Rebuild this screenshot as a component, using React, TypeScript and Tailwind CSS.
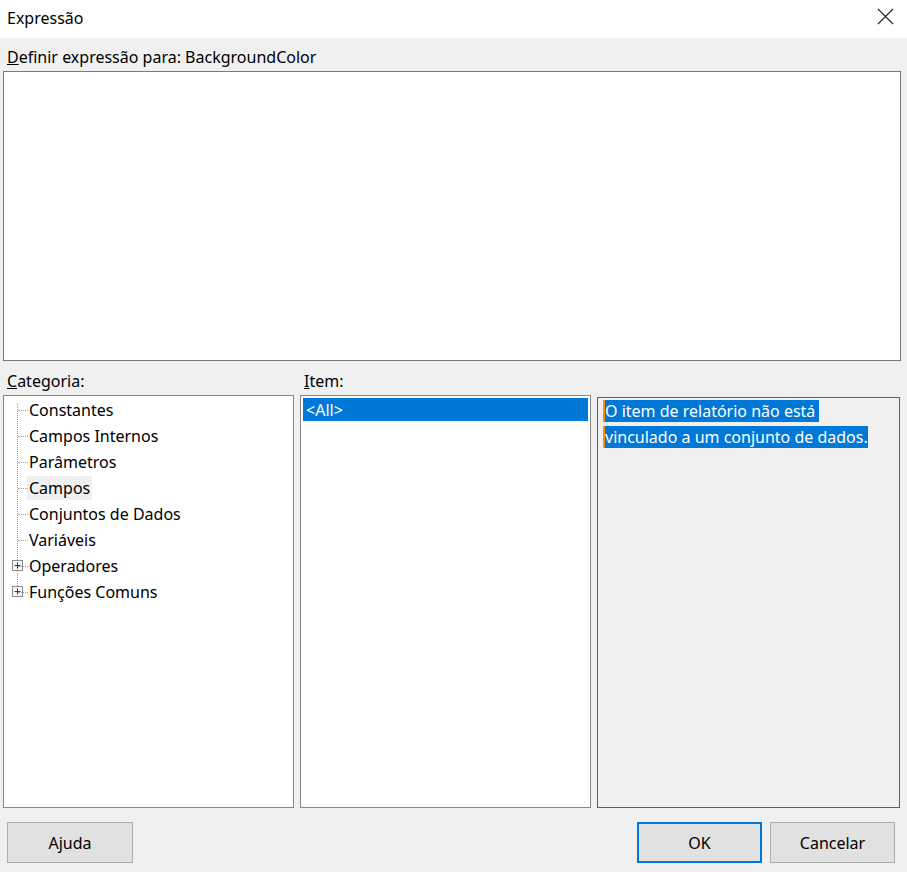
import React from "react";

const font = { fontFamily: '"Segoe UI", "Noto Sans", "Liberation Sans", sans-serif' };

function PlusBox() {
  return (
    <svg width="11" height="11" viewBox="0 0 11 11" className="shrink-0">
      <rect x="0.5" y="0.5" width="10" height="10" fill="#f7f7f7" stroke="#8c8c8c" />
      <path d="M2.5 5.5h6M5.5 2.5v6" stroke="#1c3f8a" strokeWidth="1" />
    </svg>
  );
}

const cats = [
  { label: "Constantes" },
  { label: "Campos Internos" },
  { label: "Parâmetros" },
  { label: "Campos", hover: true },
  { label: "Conjuntos de Dados" },
  { label: "Variáveis" },
  { label: "Operadores", plus: true },
  { label: "Funções Comuns", plus: true },
];

export default function App() {
  return (
    <div className="w-[907px] h-[872px] bg-[#f0f0f0] flex flex-col text-[16px] text-black" style={font}>
      {/* title bar */}
      <div className="h-[38px] bg-white flex items-center justify-between pl-[7px] pr-[13px] shrink-0">
        <span className="mt-[-2px]">Expressão</span>
        <svg width="17" height="17" viewBox="0 0 17 17" className="mt-[-6px]">
          <path d="M1 1L16 16M16 1L1 16" stroke="#222" strokeWidth="1.1" />
        </svg>
      </div>

      <div className="flex flex-col px-[3px] pr-[6px] flex-1">
        <div className="h-[33px] flex items-center pl-[4px] pt-[4px]">
          <span><u>D</u>efinir expressão para: BackgroundColor</span>
        </div>
        <div className="h-[290px] bg-white border border-[#7a7a7a] shrink-0" />

        <div className="h-[34px] flex items-end pb-[2px]">
          <span className="w-[297px] pl-[4px]"><u>C</u>ategoria:</span>
          <span className="pl-[4px]"><u>I</u>tem:</span>
        </div>

        <div className="flex h-[413px] gap-[6px]">
          {/* category tree */}
          <div className="w-[291px] bg-white border border-[#828790] relative pt-[1px]">
            <div className="absolute left-[13px] top-[7px] h-[189px] border-l border-dotted border-[#a0a0a0]" />
            {cats.map((c) => (
              <div key={c.label} className="h-[26px] flex items-center relative">
                {c.plus ? (
                  <div className="absolute left-[8px] top-[7px] bg-white">
                    <PlusBox />
                  </div>
                ) : null}
                <div className="absolute left-[14px] top-[13px] w-[10px] border-t border-dotted border-[#a0a0a0]" />
                <span className={`ml-[23px] px-[2px] h-[24px] leading-[24px] ${c.hover ? "bg-[#f0f0f0]" : ""}`}>
                  {c.label}
                </span>
              </div>
            ))}
          </div>

          {/* item list */}
          <div className="w-[291px] bg-white border border-[#828790] p-[2px]">
            <div className="h-[23px] bg-[#0078d7] text-white flex items-center pl-[3px]">&lt;All&gt;</div>
          </div>

          {/* description */}
          <div className="flex-1 mt-[2px] mr-[1px] border border-[#0078d7] bg-[#f0f0f0] pl-[5px] leading-[26px]">
            <span className="bg-[#0078d7] text-white border-l-2 border-[#ff8c00] box-decoration-clone">
              O item de relatório não está&nbsp;
              <br />
              vinculado a um conjunto de dados.
            </span>
          </div>
        </div>

        <div className="flex items-center justify-between mt-[14px] pl-[4px] pr-[6px]">
          <button className="w-[126px] h-[41px] bg-[#e1e1e1] border border-[#adadad]">Ajuda</button>
          <div className="flex gap-[8px]">
            <button className="w-[125px] h-[41px] bg-[#e1e1e1] border-2 border-[#0078d7]">OK</button>
            <button className="w-[125px] h-[41px] bg-[#e1e1e1] border border-[#adadad]">Cancelar</button>
          </div>
        </div>
      </div>
    </div>
  );
}
